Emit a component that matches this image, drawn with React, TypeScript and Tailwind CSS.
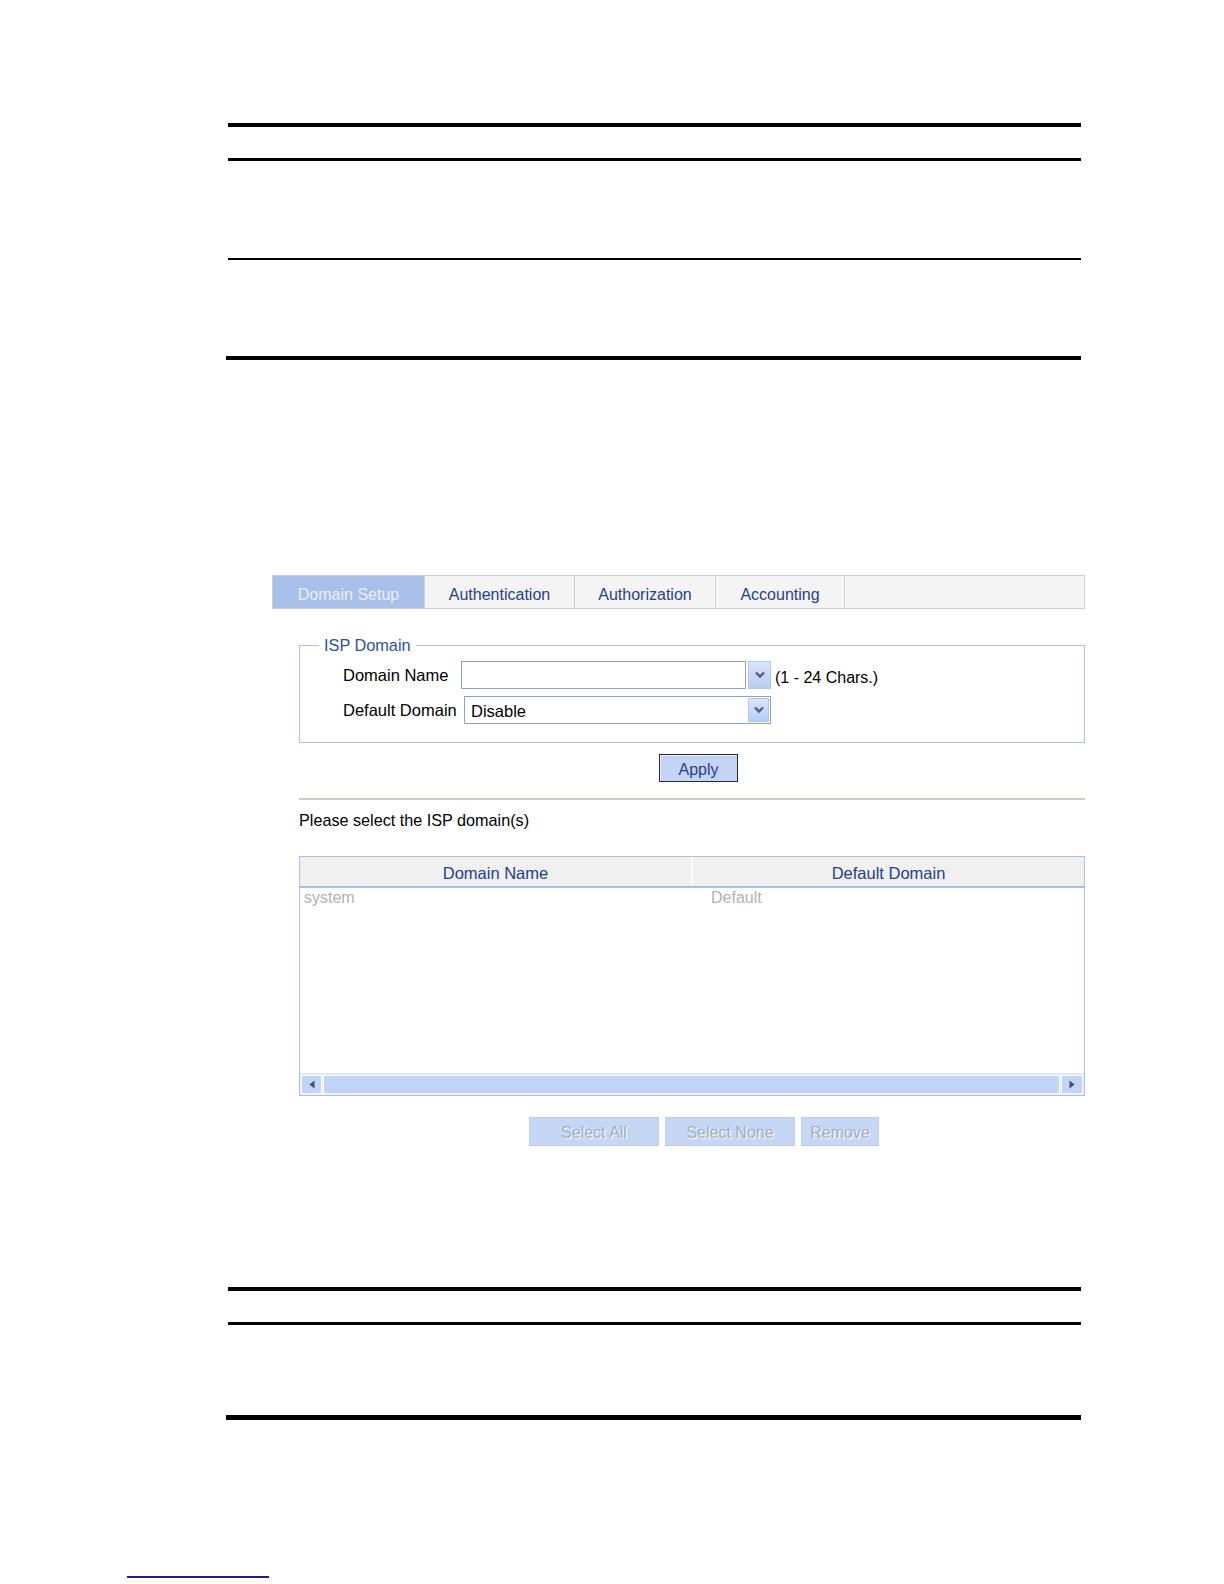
const font = "font-['Liberation_Sans',Arial,sans-serif]"

const tabs = [
  { label: "Domain Setup", width: "w-[152px]", active: true },
  { label: "Authentication", width: "w-[150px]", active: false },
  { label: "Authorization", width: "w-[141px]", active: false },
  { label: "Accounting", width: "w-[129px]", active: false },
]

function Chevron() {
  return (
    <svg width="12" height="8" viewBox="0 0 12 8" aria-hidden="true">
      <polyline points="2,1.5 6,5.5 10,1.5" fill="none" stroke="#4b5d8f" strokeWidth="2.4" />
    </svg>
  )
}

function ArrowBox({ className = "" }: { className?: string }) {
  return (
    <div
      className={`flex items-center justify-center border border-[#b4c6ec] bg-gradient-to-b from-[#dbe5fb] to-[#b9ccf3] ${className}`}
    >
      <Chevron />
    </div>
  )
}

function Triangle({ dir }: { dir: "left" | "right" }) {
  return (
    <svg width="6" height="9" viewBox="0 0 6 9" aria-hidden="true">
      {dir === "left" ? (
        <polygon points="5.5,0.5 5.5,8.5 0.5,4.5" fill="#3c4c74" />
      ) : (
        <polygon points="0.5,0.5 0.5,8.5 5.5,4.5" fill="#3c4c74" />
      )}
    </svg>
  )
}

function DocLinesTop() {
  return (
    <div className="ml-[228px] w-[853px] pt-[123px]">
      <div className="h-[4px] bg-black" />
      <div className="mt-[31px] h-[3px] bg-black" />
      <div className="mt-[97px] h-[1.5px] bg-black" />
      <div className="-ml-[2px] mt-[96px] h-[4.5px] w-[855px] bg-black" />
    </div>
  )
}

function DocLinesBottom() {
  return (
    <div className="ml-[228px] w-[853px]">
      <div className="h-[4px] bg-black" />
      <div className="mt-[31px] h-[3px] bg-black" />
      <div className="-ml-[2px] mt-[90px] h-[4.5px] w-[855px] bg-black" />
    </div>
  )
}

function DisabledButton({ label, width }: { label: string; width: string }) {
  return (
    <button
      type="button"
      disabled
      className={`flex h-[29px] items-center justify-center border border-[#bccdf0] bg-[#c6d7f5] pt-[3px] text-[16px] text-[#a3adc2] [text-shadow:1px_1px_0_#ffffff] ${width}`}
    >
      {label}
    </button>
  )
}

function DomainPanel() {
  return (
    <div className="ml-[272px] mt-[215px] w-[813px]">
      {/* tab strip */}
      <div className="flex h-[34px] border border-[#cfcfcf] bg-[#f4f4f4]">
        {tabs.map((tab) => (
          <div
            key={tab.label}
            className={`flex items-center justify-center border-r border-[#d0d0d0] pt-[5px] text-[16px] ${tab.width} ${
              tab.active ? "bg-[#a8c0e9] text-[#e9f0fb]" : "text-[#283f8d]"
            }`}
          >
            {tab.label}
          </div>
        ))}
        <div className="flex-1" />
      </div>

      <div className="pl-[27px]">
        {/* ISP Domain group */}
        <div className="relative mt-[36px] h-[98px] border border-[#a9c1e6] pt-[15px]">
          <span className="absolute -top-[11px] left-[19px] bg-white px-[5px] text-[16.3px] leading-[20px] text-[#2f4f9c]">
            ISP Domain
          </span>

          <div className="flex h-[28px] items-center pl-[43px] text-[16.5px] text-black">
            <span className="w-[118px]">Domain Name</span>
            <div className="h-[28px] w-[285px] border border-[#8aa4c9] bg-white" />
            <ArrowBox className="ml-[2px] h-[28px] w-[23px]" />
            <span className="ml-[4px] pt-[5px] text-[16px]">(1 - 24 Chars.)</span>
          </div>

          <div className="mt-[7px] flex h-[28px] items-center pl-[43px] text-[16.5px] text-black">
            <span className="w-[121px]">Default Domain</span>
            <div className="flex h-[28px] w-[307px] items-center border border-[#8aa4c9] bg-white p-[1px]">
              <span className="flex-1 pl-[5px] pt-[2px]">Disable</span>
              <ArrowBox className="h-[24px] w-[21px]" />
            </div>
          </div>
        </div>

        <button
          type="button"
          className="ml-[360px] mt-[11px] flex h-[28px] w-[79px] items-center justify-center border border-[#2a2a2a] bg-[#c4d4f4] pt-[3px] text-[16px] text-[#2b3f8c] shadow-[inset_1px_1px_0_#e6eeff]"
        >
          Apply
        </button>

        <div className="mt-[16px] h-[2px] bg-[#cdcdc0]" />

        <p className="mt-[9.5px] text-[16.2px] leading-[20px] text-black">Please select the ISP domain(s)</p>

        {/* domain list */}
        <div className="mt-[26.5px] flex h-[240px] flex-col border border-[#a9c1e6] bg-white">
          <div className="flex h-[31px] border-b-2 border-[#a9c1e6] bg-[#f0f0f0] text-[16.5px] text-[#22408d]">
            <div className="flex w-[393px] items-center justify-center border-r-2 border-[#fbfbfb] pt-[3px]">
              Domain Name
            </div>
            <div className="flex flex-1 items-center justify-center pt-[3px]">Default Domain</div>
          </div>
          <div className="flex-1">
            <div className="flex h-[20px] items-center text-[16px] text-[#b2b2b2]">
              <span className="w-[411px] pl-[4px]">system</span>
              <span>Default</span>
            </div>
          </div>
          <div className="flex h-[22px] gap-[1px] border-t border-[#dde6f8] bg-[#e4ecfb] p-[1px]">
            <div className="flex w-[21px] items-center justify-center border border-white bg-[#c3d5f7]">
              <Triangle dir="left" />
            </div>
            <div className="flex-1 border border-white bg-[#c1d4f7]" />
            <div className="flex w-[22px] items-center justify-center border border-white bg-[#c3d5f7]">
              <Triangle dir="right" />
            </div>
          </div>
        </div>

        <div className="ml-[230px] mt-[21px] flex gap-[6px]">
          <DisabledButton label="Select All" width="w-[130px]" />
          <DisabledButton label="Select None" width="w-[130px]" />
          <DisabledButton label="Remove" width="w-[78px]" />
        </div>
      </div>
    </div>
  )
}

export default function App() {
  return (
    <div className={`min-h-[1584px] w-[1224px] bg-white ${font}`}>
      <DocLinesTop />
      <DomainPanel />
      <div className="mt-[141px]">
        <DocLinesBottom />
      </div>
      <div className="ml-[127px] mt-[156px] h-[2px] w-[142px] bg-[#1c1c8e]" />
    </div>
  )
}
